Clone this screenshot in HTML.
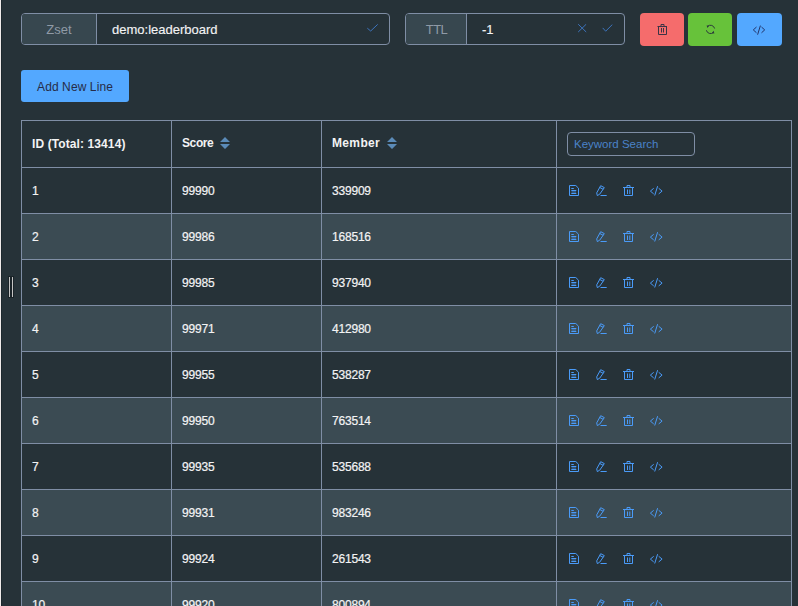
<!DOCTYPE html>
<html><head><meta charset="utf-8">
<style>
*{box-sizing:border-box;margin:0;padding:0}
html,body{width:798px;height:606px;overflow:hidden;background:#263238;font-family:"Liberation Sans",sans-serif;color:#f3f3f4}
.abs{position:absolute}
#edge{left:0;top:0;width:1px;height:606px;background:#f0ebea}
#edge2{left:1px;top:0;width:1px;height:606px;background:#1d282e}
.grp{position:absolute;top:13px;height:32px;border:1px solid #7f8ea5;border-radius:4px;overflow:hidden;background:#263238}
.pre{position:absolute;left:0;top:0;bottom:0;padding-top:1px;background:#37474f;border-right:1px solid #7f8ea5;color:#8f9aa6;font-size:13px;text-align:center;line-height:30px}
.val{position:absolute;top:1px;line-height:30px;font-size:13px;color:#f3f3f4;-webkit-text-stroke:0.15px #f3f3f4}
.btn{position:absolute;top:13px;height:33px;width:44px;border-radius:4px}
.tbl{position:absolute;left:21px;top:120px;width:771px}
.hl{position:absolute;left:21px;width:771px;height:1px;background:#7f8ea5}
.vl{position:absolute;top:120px;height:486px;width:1px;background:#7f8ea5}
.row{position:absolute;left:21px;width:771px;height:46px}
.st{background:#3b4b53}
.c{position:absolute;font-size:12px;color:#f3f3f4;line-height:14px;-webkit-text-stroke:0.2px #f3f3f4;letter-spacing:-0.2px}
.h{position:absolute;font-size:12px;font-weight:bold;color:#f3f3f4;line-height:14px}
</style></head><body>
<div class="abs" id="edge"></div><div class="abs" id="edge2"></div>

<!-- Zset group -->
<div class="grp" style="left:21px;width:369px">
  <div class="pre" style="width:75px">Zset</div>
  <div class="val" style="left:90px">demo:leaderboard</div>
  <svg class="abs" style="left:345px;top:10px" width="12" height="9" viewBox="0 0 12 9"><path d="M0.3 4.2 L3.7 7 L10.7 0.4" fill="none" stroke="#3d74bd" stroke-width="1"/></svg>
</div>

<!-- TTL group -->
<div class="grp" style="left:405px;width:220px">
  <div class="pre" style="width:61px;letter-spacing:-0.6px;text-indent:1px">TTL</div>
  <div class="val" style="left:76px">-1</div>
  <svg class="abs" style="left:172px;top:10px" width="10" height="10" viewBox="0 0 10 10"><path d="M0.2 0.2 L8.2 8 M8.2 0.2 L0.2 8" fill="none" stroke="#3d74bd" stroke-width="1"/></svg>
  <svg class="abs" style="left:196px;top:10px" width="12" height="9" viewBox="0 0 12 9"><path d="M0.7 3.9 L3.7 7.2 L10.3 0.6" fill="none" stroke="#3d74bd" stroke-width="1"/></svg>
</div>

<!-- action buttons -->
<div class="btn" style="left:640px;background:#f56c6c"><svg class="abs" style="left:16px;top:10px" width="13" height="13" viewBox="0 0 13 13"><g fill="none" stroke="#3b3446" stroke-width="1"><path d="M1.5 3.5 H11 M5 3.5 V1.5 H8 V3.5 M2.5 3.5 V11.5 H10.5 V3.5 M5.5 5 V9.5 M7.5 5 V9.5"/></g></svg></div>
<div class="btn" style="left:688px;background:#67c23a"><svg class="abs" style="left:16px;top:10px" width="13" height="13" viewBox="0 0 13 13"><g fill="none" stroke="#2c3a3c" stroke-width="1"><path d="M3.6 3.4 A4.2 4.2 0 0 1 10.6 5.5 M9.4 9.4 A4.2 4.2 0 0 1 2.4 7.3"/></g><path d="M2.6 2.4 L5.2 2.6 L3.4 5 Z M10.4 10.4 L7.8 10.2 L9.6 7.8 Z" fill="#2c3a3c"/></svg></div>
<div class="btn" style="left:737px;width:45px;background:#53a8ff"><svg class="abs" style="left:15px;top:12px" width="14" height="11" viewBox="0 0 14 11"><g fill="none" stroke="#22346a" stroke-width="1"><path d="M4.5 2 L1.3 4.9 L4.5 7.8 M9.5 2 L12.7 4.9 L9.5 7.8 M8.4 0.6 L5.6 9.7"/></g></svg></div>

<!-- Add New Line -->
<div class="abs" style="left:21px;top:70px;width:108px;height:32px;background:#53a8ff;border-radius:3px;font-size:12px;color:#262c48;text-align:center;line-height:34px;letter-spacing:0.1px">Add New Line</div>

<div class="row st" style="top:214px"></div>
<div class="row st" style="top:306px"></div>
<div class="row st" style="top:398px"></div>
<div class="row st" style="top:490px"></div>
<div class="row st" style="top:582px"></div>
<div class="hl" style="top:120px"></div>
<div class="hl" style="top:167px"></div>
<div class="hl" style="top:213px"></div>
<div class="hl" style="top:259px"></div>
<div class="hl" style="top:305px"></div>
<div class="hl" style="top:351px"></div>
<div class="hl" style="top:397px"></div>
<div class="hl" style="top:443px"></div>
<div class="hl" style="top:489px"></div>
<div class="hl" style="top:535px"></div>
<div class="hl" style="top:581px"></div>
<div class="hl" style="top:627px"></div>
<div class="vl" style="left:21px"></div>
<div class="vl" style="left:171px"></div>
<div class="vl" style="left:321px"></div>
<div class="vl" style="left:556px"></div>
<div class="vl" style="left:791px"></div>
<div class="c" style="left:32px;top:184px">1</div>
<div class="c" style="left:182px;top:184px">99990</div>
<div class="c" style="left:332px;top:184px">339909</div>
<svg class="abs" style="left:568px;top:185px" width="100" height="14" viewBox="0 0 100 14"><g fill="none" stroke="#4a9bf8" stroke-width="1">
<path d="M1.5 0.5 H7.8 L10.5 3.2 V10.5 H1.5 Z"/>
<path d="M3.3 3.5 H5.8 M3.3 5.5 H8.3 M3.3 8.5 H8.3"/>
<rect x="3.5" y="6" width="4.5" height="2" fill="#4a9bf8" fill-opacity="0.35" stroke="none"/>
<path d="M32.7 0.7 L36.3 2.6 L31.7 9.2 L29.3 10.6 L28.7 7.9 Z M31.6 2.4 L35.2 4.3"/>
<path d="M32.5 10.5 H38.7"/>
<path d="M55 2.5 H66 M59 2.5 V0.5 H62 V2.5 M56.5 2.5 V10.5 H64.5 V2.5 M59.5 4.5 V9 M61.8 4.5 V9"/>
<path d="M85.7 3.3 L82.4 6.1 L85.7 8.9 M90.7 3.3 L94.1 6.1 L90.7 8.9 M89.6 1.2 L86.7 10.5"/>
</g></svg>
<div class="c" style="left:32px;top:230px">2</div>
<div class="c" style="left:182px;top:230px">99986</div>
<div class="c" style="left:332px;top:230px">168516</div>
<svg class="abs" style="left:568px;top:231px" width="100" height="14" viewBox="0 0 100 14"><g fill="none" stroke="#4a9bf8" stroke-width="1">
<path d="M1.5 0.5 H7.8 L10.5 3.2 V10.5 H1.5 Z"/>
<path d="M3.3 3.5 H5.8 M3.3 5.5 H8.3 M3.3 8.5 H8.3"/>
<rect x="3.5" y="6" width="4.5" height="2" fill="#4a9bf8" fill-opacity="0.35" stroke="none"/>
<path d="M32.7 0.7 L36.3 2.6 L31.7 9.2 L29.3 10.6 L28.7 7.9 Z M31.6 2.4 L35.2 4.3"/>
<path d="M32.5 10.5 H38.7"/>
<path d="M55 2.5 H66 M59 2.5 V0.5 H62 V2.5 M56.5 2.5 V10.5 H64.5 V2.5 M59.5 4.5 V9 M61.8 4.5 V9"/>
<path d="M85.7 3.3 L82.4 6.1 L85.7 8.9 M90.7 3.3 L94.1 6.1 L90.7 8.9 M89.6 1.2 L86.7 10.5"/>
</g></svg>
<div class="c" style="left:32px;top:276px">3</div>
<div class="c" style="left:182px;top:276px">99985</div>
<div class="c" style="left:332px;top:276px">937940</div>
<svg class="abs" style="left:568px;top:277px" width="100" height="14" viewBox="0 0 100 14"><g fill="none" stroke="#4a9bf8" stroke-width="1">
<path d="M1.5 0.5 H7.8 L10.5 3.2 V10.5 H1.5 Z"/>
<path d="M3.3 3.5 H5.8 M3.3 5.5 H8.3 M3.3 8.5 H8.3"/>
<rect x="3.5" y="6" width="4.5" height="2" fill="#4a9bf8" fill-opacity="0.35" stroke="none"/>
<path d="M32.7 0.7 L36.3 2.6 L31.7 9.2 L29.3 10.6 L28.7 7.9 Z M31.6 2.4 L35.2 4.3"/>
<path d="M32.5 10.5 H38.7"/>
<path d="M55 2.5 H66 M59 2.5 V0.5 H62 V2.5 M56.5 2.5 V10.5 H64.5 V2.5 M59.5 4.5 V9 M61.8 4.5 V9"/>
<path d="M85.7 3.3 L82.4 6.1 L85.7 8.9 M90.7 3.3 L94.1 6.1 L90.7 8.9 M89.6 1.2 L86.7 10.5"/>
</g></svg>
<div class="c" style="left:32px;top:322px">4</div>
<div class="c" style="left:182px;top:322px">99971</div>
<div class="c" style="left:332px;top:322px">412980</div>
<svg class="abs" style="left:568px;top:323px" width="100" height="14" viewBox="0 0 100 14"><g fill="none" stroke="#4a9bf8" stroke-width="1">
<path d="M1.5 0.5 H7.8 L10.5 3.2 V10.5 H1.5 Z"/>
<path d="M3.3 3.5 H5.8 M3.3 5.5 H8.3 M3.3 8.5 H8.3"/>
<rect x="3.5" y="6" width="4.5" height="2" fill="#4a9bf8" fill-opacity="0.35" stroke="none"/>
<path d="M32.7 0.7 L36.3 2.6 L31.7 9.2 L29.3 10.6 L28.7 7.9 Z M31.6 2.4 L35.2 4.3"/>
<path d="M32.5 10.5 H38.7"/>
<path d="M55 2.5 H66 M59 2.5 V0.5 H62 V2.5 M56.5 2.5 V10.5 H64.5 V2.5 M59.5 4.5 V9 M61.8 4.5 V9"/>
<path d="M85.7 3.3 L82.4 6.1 L85.7 8.9 M90.7 3.3 L94.1 6.1 L90.7 8.9 M89.6 1.2 L86.7 10.5"/>
</g></svg>
<div class="c" style="left:32px;top:368px">5</div>
<div class="c" style="left:182px;top:368px">99955</div>
<div class="c" style="left:332px;top:368px">538287</div>
<svg class="abs" style="left:568px;top:369px" width="100" height="14" viewBox="0 0 100 14"><g fill="none" stroke="#4a9bf8" stroke-width="1">
<path d="M1.5 0.5 H7.8 L10.5 3.2 V10.5 H1.5 Z"/>
<path d="M3.3 3.5 H5.8 M3.3 5.5 H8.3 M3.3 8.5 H8.3"/>
<rect x="3.5" y="6" width="4.5" height="2" fill="#4a9bf8" fill-opacity="0.35" stroke="none"/>
<path d="M32.7 0.7 L36.3 2.6 L31.7 9.2 L29.3 10.6 L28.7 7.9 Z M31.6 2.4 L35.2 4.3"/>
<path d="M32.5 10.5 H38.7"/>
<path d="M55 2.5 H66 M59 2.5 V0.5 H62 V2.5 M56.5 2.5 V10.5 H64.5 V2.5 M59.5 4.5 V9 M61.8 4.5 V9"/>
<path d="M85.7 3.3 L82.4 6.1 L85.7 8.9 M90.7 3.3 L94.1 6.1 L90.7 8.9 M89.6 1.2 L86.7 10.5"/>
</g></svg>
<div class="c" style="left:32px;top:414px">6</div>
<div class="c" style="left:182px;top:414px">99950</div>
<div class="c" style="left:332px;top:414px">763514</div>
<svg class="abs" style="left:568px;top:415px" width="100" height="14" viewBox="0 0 100 14"><g fill="none" stroke="#4a9bf8" stroke-width="1">
<path d="M1.5 0.5 H7.8 L10.5 3.2 V10.5 H1.5 Z"/>
<path d="M3.3 3.5 H5.8 M3.3 5.5 H8.3 M3.3 8.5 H8.3"/>
<rect x="3.5" y="6" width="4.5" height="2" fill="#4a9bf8" fill-opacity="0.35" stroke="none"/>
<path d="M32.7 0.7 L36.3 2.6 L31.7 9.2 L29.3 10.6 L28.7 7.9 Z M31.6 2.4 L35.2 4.3"/>
<path d="M32.5 10.5 H38.7"/>
<path d="M55 2.5 H66 M59 2.5 V0.5 H62 V2.5 M56.5 2.5 V10.5 H64.5 V2.5 M59.5 4.5 V9 M61.8 4.5 V9"/>
<path d="M85.7 3.3 L82.4 6.1 L85.7 8.9 M90.7 3.3 L94.1 6.1 L90.7 8.9 M89.6 1.2 L86.7 10.5"/>
</g></svg>
<div class="c" style="left:32px;top:460px">7</div>
<div class="c" style="left:182px;top:460px">99935</div>
<div class="c" style="left:332px;top:460px">535688</div>
<svg class="abs" style="left:568px;top:461px" width="100" height="14" viewBox="0 0 100 14"><g fill="none" stroke="#4a9bf8" stroke-width="1">
<path d="M1.5 0.5 H7.8 L10.5 3.2 V10.5 H1.5 Z"/>
<path d="M3.3 3.5 H5.8 M3.3 5.5 H8.3 M3.3 8.5 H8.3"/>
<rect x="3.5" y="6" width="4.5" height="2" fill="#4a9bf8" fill-opacity="0.35" stroke="none"/>
<path d="M32.7 0.7 L36.3 2.6 L31.7 9.2 L29.3 10.6 L28.7 7.9 Z M31.6 2.4 L35.2 4.3"/>
<path d="M32.5 10.5 H38.7"/>
<path d="M55 2.5 H66 M59 2.5 V0.5 H62 V2.5 M56.5 2.5 V10.5 H64.5 V2.5 M59.5 4.5 V9 M61.8 4.5 V9"/>
<path d="M85.7 3.3 L82.4 6.1 L85.7 8.9 M90.7 3.3 L94.1 6.1 L90.7 8.9 M89.6 1.2 L86.7 10.5"/>
</g></svg>
<div class="c" style="left:32px;top:506px">8</div>
<div class="c" style="left:182px;top:506px">99931</div>
<div class="c" style="left:332px;top:506px">983246</div>
<svg class="abs" style="left:568px;top:507px" width="100" height="14" viewBox="0 0 100 14"><g fill="none" stroke="#4a9bf8" stroke-width="1">
<path d="M1.5 0.5 H7.8 L10.5 3.2 V10.5 H1.5 Z"/>
<path d="M3.3 3.5 H5.8 M3.3 5.5 H8.3 M3.3 8.5 H8.3"/>
<rect x="3.5" y="6" width="4.5" height="2" fill="#4a9bf8" fill-opacity="0.35" stroke="none"/>
<path d="M32.7 0.7 L36.3 2.6 L31.7 9.2 L29.3 10.6 L28.7 7.9 Z M31.6 2.4 L35.2 4.3"/>
<path d="M32.5 10.5 H38.7"/>
<path d="M55 2.5 H66 M59 2.5 V0.5 H62 V2.5 M56.5 2.5 V10.5 H64.5 V2.5 M59.5 4.5 V9 M61.8 4.5 V9"/>
<path d="M85.7 3.3 L82.4 6.1 L85.7 8.9 M90.7 3.3 L94.1 6.1 L90.7 8.9 M89.6 1.2 L86.7 10.5"/>
</g></svg>
<div class="c" style="left:32px;top:552px">9</div>
<div class="c" style="left:182px;top:552px">99924</div>
<div class="c" style="left:332px;top:552px">261543</div>
<svg class="abs" style="left:568px;top:553px" width="100" height="14" viewBox="0 0 100 14"><g fill="none" stroke="#4a9bf8" stroke-width="1">
<path d="M1.5 0.5 H7.8 L10.5 3.2 V10.5 H1.5 Z"/>
<path d="M3.3 3.5 H5.8 M3.3 5.5 H8.3 M3.3 8.5 H8.3"/>
<rect x="3.5" y="6" width="4.5" height="2" fill="#4a9bf8" fill-opacity="0.35" stroke="none"/>
<path d="M32.7 0.7 L36.3 2.6 L31.7 9.2 L29.3 10.6 L28.7 7.9 Z M31.6 2.4 L35.2 4.3"/>
<path d="M32.5 10.5 H38.7"/>
<path d="M55 2.5 H66 M59 2.5 V0.5 H62 V2.5 M56.5 2.5 V10.5 H64.5 V2.5 M59.5 4.5 V9 M61.8 4.5 V9"/>
<path d="M85.7 3.3 L82.4 6.1 L85.7 8.9 M90.7 3.3 L94.1 6.1 L90.7 8.9 M89.6 1.2 L86.7 10.5"/>
</g></svg>
<div class="c" style="left:32px;top:598px">10</div>
<div class="c" style="left:182px;top:598px">99920</div>
<div class="c" style="left:332px;top:598px">800894</div>
<svg class="abs" style="left:568px;top:599px" width="100" height="14" viewBox="0 0 100 14"><g fill="none" stroke="#4a9bf8" stroke-width="1">
<path d="M1.5 0.5 H7.8 L10.5 3.2 V10.5 H1.5 Z"/>
<path d="M3.3 3.5 H5.8 M3.3 5.5 H8.3 M3.3 8.5 H8.3"/>
<rect x="3.5" y="6" width="4.5" height="2" fill="#4a9bf8" fill-opacity="0.35" stroke="none"/>
<path d="M32.7 0.7 L36.3 2.6 L31.7 9.2 L29.3 10.6 L28.7 7.9 Z M31.6 2.4 L35.2 4.3"/>
<path d="M32.5 10.5 H38.7"/>
<path d="M55 2.5 H66 M59 2.5 V0.5 H62 V2.5 M56.5 2.5 V10.5 H64.5 V2.5 M59.5 4.5 V9 M61.8 4.5 V9"/>
<path d="M85.7 3.3 L82.4 6.1 L85.7 8.9 M90.7 3.3 L94.1 6.1 L90.7 8.9 M89.6 1.2 L86.7 10.5"/>
</g></svg>
<div class="h" style="left:32px;top:137px;letter-spacing:0.1px">ID (Total: 13414)</div>
<div class="h" style="left:182px;top:136px;letter-spacing:-0.4px">Score</div>
<div class="h" style="left:332px;top:136px;letter-spacing:0.35px">Member</div>
<svg class="abs" style="left:220px;top:137px" width="10" height="12" viewBox="0 0 10 12"><path d="M5 0 L10 5 H0 Z M0 7 H10 L5 12 Z" fill="#5b8bb8"/></svg>
<svg class="abs" style="left:387px;top:137px" width="10" height="12" viewBox="0 0 10 12"><path d="M5 0 L10 5 H0 Z M0 7 H10 L5 12 Z" fill="#5b8bb8"/></svg>
<div class="abs" style="left:9px;top:277px;width:1px;height:20px;background:#c4c4c4;box-shadow:0 0 0 1px #1a2328"></div>
<div class="abs" style="left:12px;top:277px;width:1px;height:20px;background:#c4c4c4;box-shadow:0 0 0 1px #1a2328"></div>

<div class="abs" style="left:567px;top:132px;width:128px;height:24px;border:1px solid #7f8ea5;border-radius:4px;font-size:11.5px;color:#4a82c8;line-height:23px;padding-left:6px">Keyword Search</div>

</body></html>
